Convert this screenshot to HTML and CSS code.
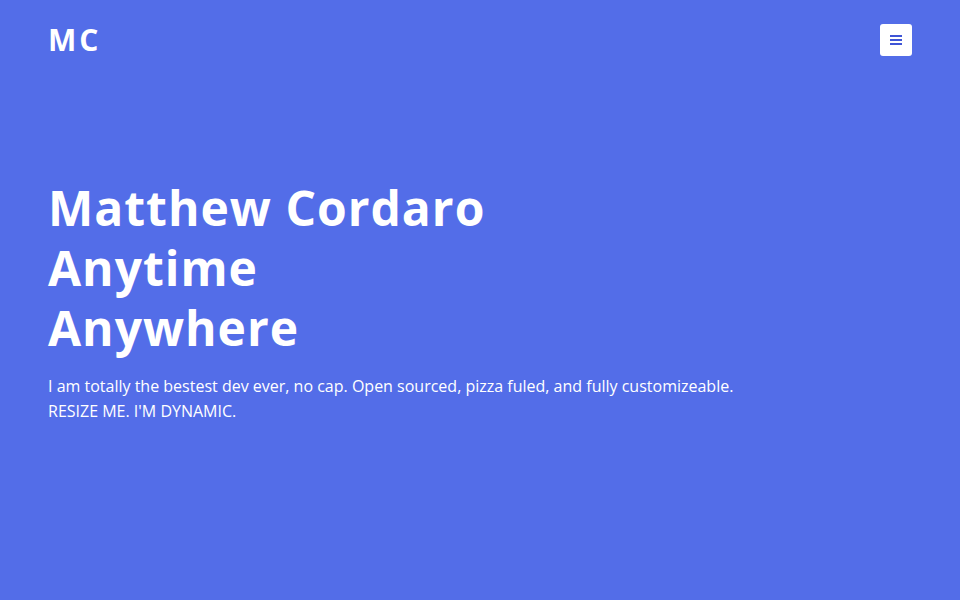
FILE: index.html
```html
<!DOCTYPE html>
<html lang="en">
<head>
<meta charset="utf-8">
<title>Matthew Cordaro</title>
<link rel="stylesheet" href="styles.css">
</head>
<body>
<div class="page">
  <header class="topbar">
    <div class="logo">MC</div>
    <button class="menu-btn" aria-label="Menu">
      <svg width="12" height="12" viewBox="0 0 12 12"><rect x="0" y="1" width="12" height="2" fill="#3f55d6"/><rect x="0" y="5" width="12" height="2" fill="#3f55d6"/><rect x="0" y="9" width="12" height="2" fill="#3f55d6"/></svg>
    </button>
  </header>
  <main class="hero">
    <h1 class="title">Matthew Cordaro<br>Anytime<br>Anywhere</h1>
    <p class="lead">I am totally the bestest dev ever, no cap. Open sourced, pizza fuled, and fully customizeable.<br>RESIZE ME. I'M DYNAMIC.</p>
  </main>
</div>
</body>
</html>
```
FILE: styles.css
```css
html, body {
  margin: 0;
  padding: 0;
}
body {
  background: #536de8;
  font-family: "Open Sans", "Noto Sans", sans-serif;
  color: #fff;
}
.page {
  min-height: 600px;
}
.topbar {
  display: flex;
  justify-content: space-between;
  align-items: center;
  padding: 24px 48px 0 48px;
}
.logo {
  font-size: 30px;
  font-weight: 700;
  letter-spacing: 3px;
  line-height: 32px;
}
.menu-btn {
  width: 32px;
  height: 32px;
  border: none;
  border-radius: 3px;
  background: #fff;
  display: flex;
  align-items: center;
  justify-content: center;
  padding: 0;
}
.hero {
  padding: 122px 48px 0 48px;
}
.title {
  margin: 0;
  font-size: 48px;
  line-height: 60px;
  font-weight: 700;
  letter-spacing: 1px;
}
.lead {
  margin: 16px 0 0 0;
  font-size: 16px;
  line-height: 25px;
}
```
